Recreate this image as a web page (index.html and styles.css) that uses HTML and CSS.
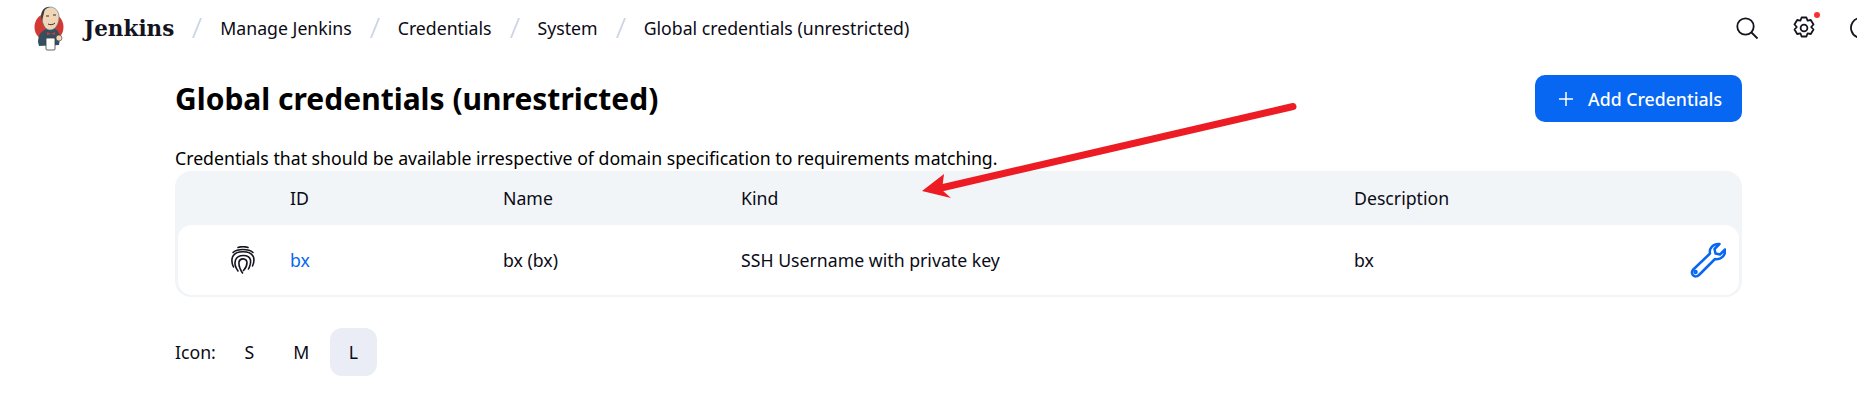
FILE: index.html
```html
<!DOCTYPE html>
<html lang="en">
<head>
    <meta charset="UTF-8">
    <title>Global credentials (unrestricted) - Jenkins</title>
    <link rel="stylesheet" href="styles.css">
</head>
<body>
    <header class="topbar">
        <a class="brand">
            <svg class="logo" viewBox="0 0 32 46" width="32" height="46">
                <circle cx="16" cy="22" r="14.5" fill="#d33833"/>
                <path d="M5 37c0-7 4-12 9-13l8 0c3 1 5 5 5 9l-1 7-20 1z" fill="#335061"/>
                <path d="M9 14C8 6 12 2 17 2c5 0 9 4 9 10 0 6-3 13-9 13-4 0-7-4-8-11z" fill="#f0d6b7" stroke="#49728b" stroke-width=".6"/>
                <path d="M9 16C6 7 11 1 17 2c-4 1-6 3-6 6l-1 4z" fill="#3e3e3e"/>
                <path d="M13 11h3M20 10h3M15 19c2 1 5 1 7-1" stroke="#3e2a20" stroke-width="1" fill="none"/>
                <path d="M14 27l4 2 4-2v3l-4-1-4 1z" fill="#d33833"/>
                <rect x="13" y="33" width="9" height="12" rx="1" fill="#fff" stroke="#3e3e3e" stroke-width=".8"/>
                <circle cx="26" cy="33" r="3" fill="#f0d6b7" stroke="#3e3e3e" stroke-width=".6"/>
            </svg>
            <span class="brand-name">Jenkins</span>
        </a>
        <nav class="crumbs">
            <span class="sep"></span><a>Manage Jenkins</a>
            <span class="sep"></span><a>Credentials</a>
            <span class="sep"></span><a>System</a>
            <span class="sep"></span><a>Global credentials (unrestricted)</a>
        </nav>
        <div class="actions">
            <svg class="action" viewBox="0 0 24 24" width="24" height="24"><circle cx="10.500" cy="10.500" r="8.200"/><path d="M16.500 16.500l6 6"/></svg>
            <div class="gear">
                <svg class="action" viewBox="0 0 24 24" width="24" height="24"><circle cx="12" cy="12" r="3.400"/><path d="M9.600 1.500h4.800l1.200 3.200 3.200-.7 2.700 4.500-2.300 2.500 2.300 2.500-2.700 4.500-3.200-.7-1.200 3.200H9.600l-1.200-3.200-3.200.7-2.700-4.500 2.300-2.500-2.300-2.500 2.700-4.500 3.200.7z" stroke-linejoin="round"/></svg>
                <span class="dot"></span>
            </div>
            <svg class="action" viewBox="0 0 24 24" width="24" height="24"><path d="M22 12a10 10 0 1 0-6 9l5 2-1-5"/></svg>
        </div>
    </header>

    <main class="content">
        <div class="title-row">
            <h1>Global credentials (unrestricted)</h1>
            <a class="add-btn">
                <svg class="plus" viewBox="0 0 14 14" width="14" height="14"><path d="M7 0v14M0 7h14"/></svg>
                Add Credentials
            </a>
        </div>
        <p class="desc">Credentials that should be available irrespective of domain specification to requirements matching.</p>

        <div class="table">
            <div class="row head">
                <div></div><div>ID</div><div>Name</div><div>Kind</div><div>Description</div><div></div>
            </div>
            <div class="row body">
                <div class="cell-icon">
                    <svg viewBox="0 0 24 28" width="24" height="28" class="print">
                        <path d="M7 1.500c3-1 7-1 10 0"/>
                        <path d="M2 6.500c4.500-4 15.500-4 20 0"/>
                        <path d="M2.500 21c-2-4-2-7-1-10 3-7 18-7 21 0 .8 3 .5 6-1 9"/>
                        <path d="M7 25c-3-4-3.500-8-2.500-11 2.500-6 13.500-6 15 0 .5 3-.5 6-2 9"/>
                        <path d="M11.500 27c-2-3-4-7-3.500-11 1-4.500 7.500-4 8 .5 0 3.500-1.500 6-3.500 8"/>
                    </svg>
                </div>
                <div><a class="id-link">bx</a></div>
                <div>bx (bx)</div>
                <div>SSH Username with private key</div>
                <div>bx</div>
                <div class="cell-tool">
                    <svg viewBox="0 0 36 36" width="36" height="36" class="wrench">
                        <path d="M20 11.500c-1-5 3-10 9.500-9.500l-5 5 1 4.500 4.500 1 5-5c.8 6-4 10.500-10 9.500L9 33c-2 1.800-4.500 1.800-6 .2s-1.500-4 .3-5.700z"/>
                        <circle cx="5.500" cy="30" r="1"/>
                    </svg>
                </div>
            </div>
        </div>

        <div class="icon-size">
            <span class="icon-label">Icon:</span>
            <a class="size">S</a>
            <a class="size">M</a>
            <a class="size active">L</a>
        </div>
    </main>

    <svg class="arrow" viewBox="0 0 1857 400" width="1857" height="400">
        <path d="M1293 106.500L941 188" stroke="#ed1c24" stroke-width="7" stroke-linecap="round" fill="none"/>
        <path d="M922 191L944 174 942 190 951 198z" fill="#ed1c24"/>
    </svg>
</body>
</html>
```
FILE: styles.css
```css
html, body { margin: 0; height: 400px; overflow: hidden; }
body { font-family: "Noto Sans", "Open Sans", sans-serif; font-size: 17.7px; color: #0b0b16; background: #fff; position: relative; }
a { color: inherit; text-decoration: none; }

.topbar { display: flex; align-items: center; height: 56px; padding-left: 33px; }
.brand { display: flex; align-items: center; gap: 19px; }
.brand-name { font-family: "DejaVu Serif", "Liberation Serif", serif; font-weight: 700; font-size: 21.5px; color: #14141f; }
.crumbs { display: flex; align-items: center; }
.sep { width: 2px; height: 20px; margin: 0 22px; background: #ccd6e6; transform: skewX(-22deg); }
.actions { margin-left: auto; display: flex; align-items: center; gap: 33px; margin-right: -16px; }
.action { fill: none; stroke: #14141f; stroke-width: 1.800; display: block; }
.gear { position: relative; }
.dot { position: absolute; top: -4px; right: -4px; width: 6px; height: 6px; background: #fe2e2e; border-radius: 50%; }

.content { padding: 19px 115px 0 175px; }
.title-row { display: flex; align-items: center; justify-content: space-between; height: 47px; }
h1 { margin: 0; font-size: 30px; font-weight: 700; color: #000; }
.add-btn { display: flex; align-items: center; gap: 15px; height: 47px; padding: 0 20px 0 24px; background: #0767f2; color: #fff; border-radius: 10px; font-weight: 500; }
.plus { fill: none; stroke: #fff; stroke-width: 1.500; }
.desc { margin: 24px 0 0; height: 24px; line-height: 24px; color: #000; }

.table { background: #f2f5f8; border-radius: 16px; padding: 0 3px 2px; margin-top: 1px; }
.row { display: grid; grid-template-columns: 112px 213px 238px 613px 1fr 52px; align-items: center; }
.head { height: 54px; }
.body { height: 70px; background: #fff; border-radius: 14px; }
.cell-icon { display: flex; justify-content: center; padding-left: 18px; }
.print { fill: none; stroke: #14141f; stroke-width: 1.600; stroke-linecap: round; }
.id-link { color: #0767f2; }
.cell-tool { display: flex; align-items: center; padding-left: 3px; }
.wrench { fill: none; stroke: #0767f2; stroke-width: 2.500; stroke-linejoin: round; }

.icon-size { display: flex; align-items: center; gap: 5px; margin-top: 31px; }
.icon-label { margin-right: 5px; }
.size { display: flex; align-items: center; justify-content: center; width: 47px; height: 48px; border-radius: 12px; }
.size.active { background: #eaedf5; }

.arrow { position: absolute; left: 0; top: 0; pointer-events: none; }
```
